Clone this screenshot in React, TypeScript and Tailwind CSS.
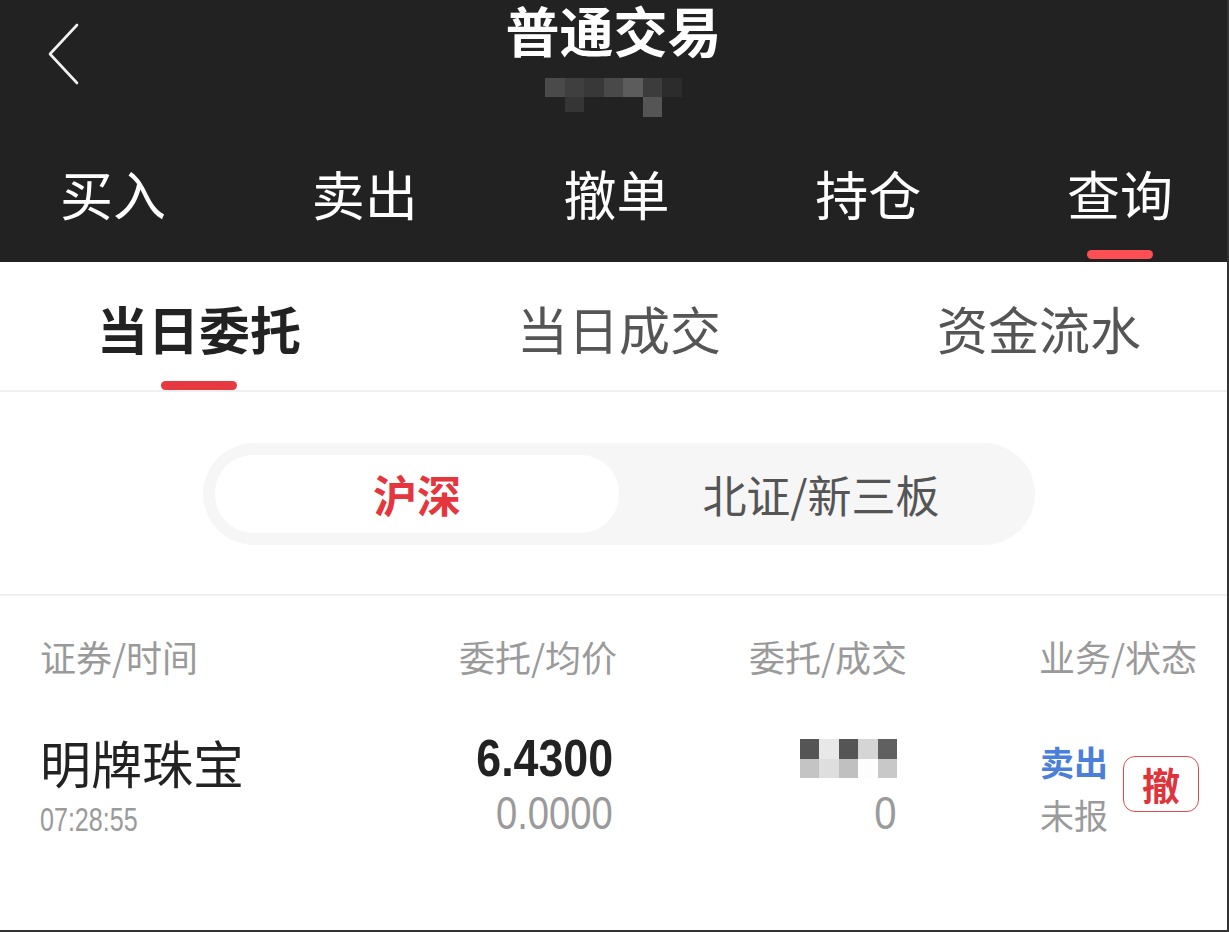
import React from 'react';

const CJK = "font-[family-name:'Noto_Sans_CJK_SC',sans-serif]";
const NUM = "font-[family-name:'Liberation_Sans','Roboto',sans-serif]";

const topTabs = ['买入', '卖出', '撤单', '持仓', '查询'];
const subTabs = ['当日委托', '当日成交', '资金流水'];

// blurred account number under the title
const mosaicTop = ['#4a4a4a', '#3f3f3f', '#383838', '#494949', '#5c5c5c', '#3c3c3c', '#2c2c2c'];

// blurred order quantity
const qtyTop = ['#555555', '#e8e8e8', '#555555', '#d5d5d5', '#606060'];
const qtyBottom = ['#c4c4c4', '#dedede', '#c0c0c0', '#fdfdfd', '#c8c8c8'];

function BackIcon() {
  return (
    <svg width="34" height="62" viewBox="0 0 34 62" fill="none">
      <polyline points="30,2 3,31 30,60" stroke="#f2f2f2" strokeWidth="2.6" strokeLinecap="round" strokeLinejoin="round" />
    </svg>
  );
}

export default function App() {
  return (
    <div className={`w-[1229px] h-[932px] bg-white border-r-2 border-b-2 border-[#333] flex flex-col overflow-hidden ${CJK}`}>
      {/* Dark header */}
      <div className="relative bg-[#222] h-[262px] flex flex-col shrink-0">
        <div className="absolute left-[47px] top-[23px]">
          <BackIcon />
        </div>
        <div className="mt-[3px] h-[54px] text-center text-white text-[54px] leading-none font-bold">普通交易</div>
        <div className="mt-[21px] h-[39px] flex justify-center">
          <div className="flex flex-col">
            <div className="flex">
              {mosaicTop.map((c, i) => (
                <div key={i} className="w-[19.5px] h-[19px]" style={{ background: c }} />
              ))}
            </div>
            <div className="flex">
              <div className="w-[19.5px]" />
              <div className="w-[19.5px] h-[15px] bg-[#353535]" />
              <div className="w-[58.5px]" />
              <div className="w-[19.5px] h-[20px] bg-[#555]" />
            </div>
          </div>
        </div>
        <div className="mt-[50px] flex justify-between items-start pl-[60px] pr-[54px]">
          {topTabs.map((t, i) => (
            <div key={t} className="flex flex-col items-center">
              <div className="text-white text-[53px] leading-none h-[53px]">{t}</div>
              <div className={`mt-[30px] w-[66px] h-[9px] rounded-full ${i === 4 ? 'bg-[#ff4f55]' : 'bg-transparent'}`} />
            </div>
          ))}
        </div>
      </div>

      {/* Sub tabs */}
      <div className="border-b-2 border-[#f0f0f0] flex justify-between items-start pl-[97px] pr-[86px] pt-[41px] shrink-0">
        {subTabs.map((t, i) => (
          <div key={t} className="flex flex-col items-center">
            <div className={`text-[51px] leading-none h-[51px] ${i === 0 ? 'font-bold text-[#222]' : 'text-[#555]'}`}>{t}</div>
            <div className={`mt-[27px] w-[76px] h-[9px] rounded-full ${i === 0 ? 'bg-[#e63a40]' : 'bg-transparent'}`} />
          </div>
        ))}
      </div>

      {/* Market switch */}
      <div className="border-b-2 border-[#f0f0f0] pt-[51px] pb-[49px] shrink-0">
        <div className="ml-[203px] w-[832px] h-[102px] rounded-full bg-[#f6f6f6] p-[12px] flex">
          <div className="w-[404px] h-[78px] rounded-[38px] bg-white flex items-center justify-center text-[44px] leading-none font-bold text-[#e5353d]">
            沪深
          </div>
          <div className="flex-1 flex items-center justify-center text-[44px] leading-none text-[#555]">
            北证/新三板
          </div>
        </div>
      </div>

      {/* Order list */}
      <div className="flex flex-col">
        <div className="flex pl-[40px] pt-[42px] text-[36px] leading-none h-[79px] text-[#9a9a9a]">
          <div className="w-[377px]">证券/时间</div>
          <div className="w-[200px] text-right">委托/均价</div>
          <div className="w-[290px] text-right">委托/成交</div>
          <div className="w-[290px] text-right">业务/状态</div>
        </div>

        <div className="flex items-start pl-[40px] mt-[44px]">
          <div className="w-[377px] flex flex-col pt-[18px]">
            <div className="text-[51px] leading-none h-[51px] text-[#222]">明牌珠宝</div>
            <div className={`mt-[15px] text-[33px] leading-none text-[#9a9a9a] scale-x-[0.76] origin-left ${NUM}`}>07:28:55</div>
          </div>
          <div className={`w-[200px] flex flex-col items-end pr-[4px] pt-[13px] ${NUM}`}>
            <div className="text-[52px] leading-none font-bold text-[#222] scale-x-[0.86] origin-right">6.4300</div>
            <div className="mt-[6px] text-[46px] leading-none text-[#9a9a9a] scale-x-[0.83] origin-right">0.0000</div>
          </div>
          <div className="w-[290px] flex flex-col items-end pr-[10px] pt-[20px]">
            <div className="flex flex-col">
              <div className="flex">
                {qtyTop.map((c, i) => (
                  <div key={i} className="w-[19.5px] h-[20px]" style={{ background: c }} />
                ))}
              </div>
              <div className="flex">
                {qtyBottom.map((c, i) => (
                  <div key={i} className="w-[19.5px] h-[19px]" style={{ background: c }} />
                ))}
              </div>
            </div>
            <div className={`mt-[12px] text-[46px] leading-none text-[#9a9a9a] scale-x-[0.87] origin-right ${NUM}`}>0</div>
          </div>
          <div className="w-[292px] flex justify-end items-start gap-[15px]">
            <div className="flex flex-col pt-[26px]">
              <div className="text-[34px] leading-none h-[34px] font-bold text-[#4b7fd9]">卖出</div>
              <div className="mt-[19px] text-[34px] leading-none h-[34px] text-[#9a9a9a]">未报</div>
            </div>
            <div className="mt-[37px] w-[76px] h-[56px] rounded-[12px] border border-[#e04850] flex items-center justify-center text-[38px] leading-none font-bold text-[#e0343c]">
              撤
            </div>
          </div>
        </div>
      </div>
    </div>
  );
}
